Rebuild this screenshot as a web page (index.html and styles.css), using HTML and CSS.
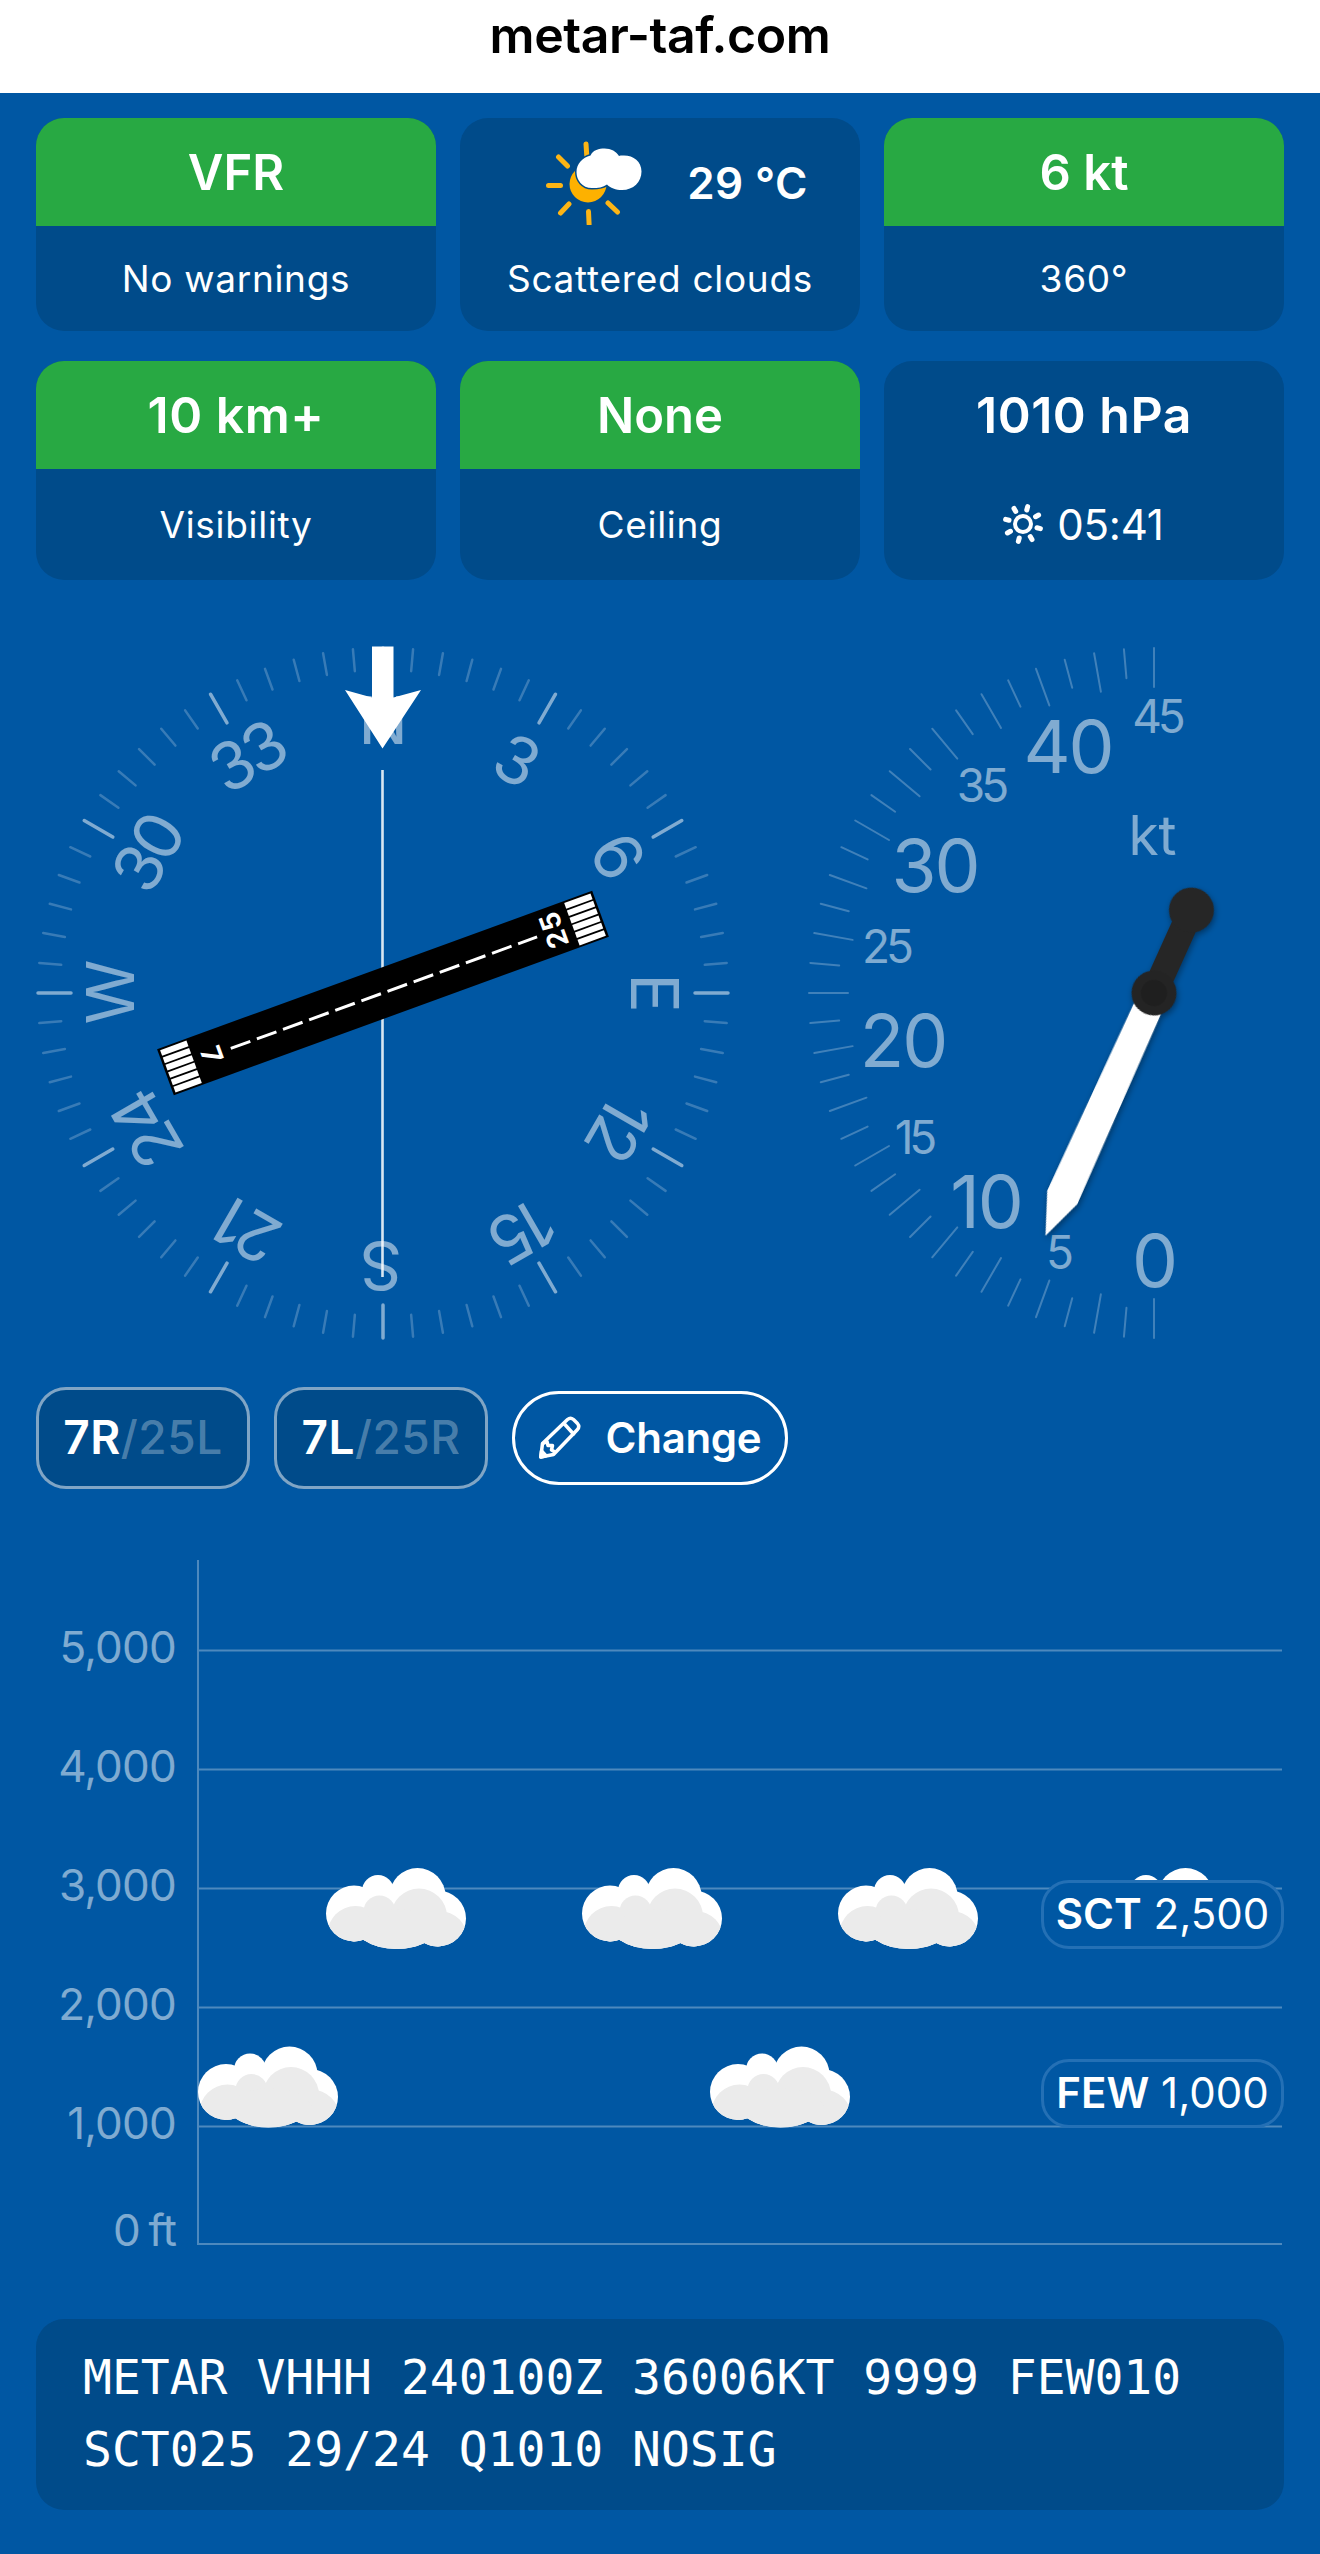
FILE: index.html
```html
<!DOCTYPE html>
<html lang="en">
<head>
  <meta charset="UTF-8" />
  <meta name="viewport" content="width=device-width, initial-scale=1.0"/>
  <title>METAR VHHH</title>
  <link rel="stylesheet" href="styles.css">
</head>
<body>

  <header class="topbar">metar-taf.com</header>

  <main>
    <section class="cards">
      <div class="card">
        <div class="value ok">VFR</div>
        <div class="label">No warnings</div>
      </div>
      <div class="card">
        <div class="value weather">
          <svg width="96" height="84" viewBox="0 0 96 84">
            <path d="M40 3l.8 12M12.500 16l9 9M2.500 44.500h12M23 63l-8.500 9M42.500 70.500l.6 12.500M62 62l9.500 9" stroke="#fdb515" stroke-width="5" stroke-linecap="round"/>
            <circle cx="42" cy="43" r="18.500" fill="#fdb100"/>
            <path d="M46 47C36 47 30.500 39 30.500 31c0-8 6-14.500 14-16.500C47 9 53 7.500 58.500 7.500c6.500 0 12 3 14.500 7.500 2-.8 4-.5 5-.5 9.500 0 17.500 6 17.500 16 0 10.500-8 18.500-19.500 18.500-6 0-12-2-15-5.500-4 3-9 3.500-15 3.500z" fill="#fff" stroke="#004b8a" stroke-width="3" paint-order="stroke"/>
          </svg>
          <span>29 °C</span>
        </div>
        <div class="label">Scattered clouds</div>
      </div>
      <div class="card">
        <div class="value ok">6 kt</div>
        <div class="label">360°</div>
      </div>
      <div class="card">
        <div class="value ok wide">10 km+</div>
        <div class="label">Visibility</div>
      </div>
      <div class="card">
        <div class="value ok">None</div>
        <div class="label">Ceiling</div>
      </div>
      <div class="card">
        <div class="value wide">1010 hPa</div>
        <div class="label time">
          <svg width="42" height="42" viewBox="-21 -21 42 42">
            <circle r="8" fill="none" stroke="#fff" stroke-width="4"/>
            <g id="sunrays" stroke="#fff" stroke-width="5" stroke-linecap="round"></g>
          </svg>
          <span>05:41</span>
        </div>
      </div>
    </section>

    <section class="dials">
      <svg class="compass" width="694" height="694" viewBox="-347 -347 694 694">
        <g id="compass-ticks"></g>
        <g id="compass-labels" class="compass-text"></g>
        <path d="M-.5-223V284" stroke="#fff" stroke-width="2.600" opacity=".85"/>
        <g transform="rotate(-20)">
          <rect x="-231.500" y="-24.500" width="463" height="49" fill="#000"/>
          <g id="stripes" fill="#fff"></g>
          <path d="M-162 0H164" stroke="#fff" stroke-width="3" stroke-dasharray="20.800 7"/>
          <text class="runway-text" transform="translate(-192 0) rotate(90)">7</text>
          <text class="runway-text" transform="translate(192 -1) rotate(-90)">25</text>
        </g>
        <path d="M-11-346.500h21.500v51l27.500-7.500L-.5-244.500-38-303l27 7.500z" fill="#fff"/>
      </svg>

      <svg class="gauge" width="476" height="694" viewBox="-346 -347 476 694">
        <g id="gauge-ticks"></g>
        <g class="gauge-text">
          <text x="0" y="294">0</text>
          <text x="-168" y="235">10</text>
          <text x="-251" y="74">20</text>
          <text x="-219" y="-101">30</text>
          <text x="-86" y="-220">40</text>
        </g>
        <g class="gauge-text small">
          <text x="-96" y="276">5</text>
          <text x="-240" y="161">15</text>
          <text x="-268" y="-30">25</text>
          <text x="-173" y="-191">35</text>
          <text x="3" y="-260">45</text>
        </g>
        <text class="unit" x="-1.500" y="-138">kt</text>
        <g class="needle" transform="rotate(24.300)">
          <path d="M-14 10L-16 224L1 266L17 224L15 10z" fill="#fff"/>
          <path d="M-13-80h26v80h-26z" fill="#262626"/>
          <circle cy="-91" r="22.500" fill="#262626"/>
          <circle r="22.500" fill="#242424"/>
          <circle r="13" fill="#1f1f1f"/>
        </g>
      </svg>
    </section>

    <section class="runways">
      <button class="runway"><b>7R</b>/25L</button>
      <button class="runway"><b>7L</b>/25R</button>
      <button class="change">
        <svg width="42" height="43" viewBox="0 0 42 43" fill="none" stroke="#fff" stroke-width="3.500" stroke-linejoin="round" stroke-linecap="round">
          <path d="M1.800 41L3.500 27.500L28.500 3.500Q31.500 1 34.500 3.500L38.500 7.500Q41 10.500 38.500 13.500L14.500 38.500z"/>
          <path d="M25 7.500L34.500 18M4 27.500L8 25.500L9 29.500L13.500 29.500L12.500 34L16 36M1.800 41L2.500 35L7 39.800z"/>
        </svg>
        <span>Change</span>
      </button>
    </section>

    <section class="chart">
      <ul class="altitudes">
        <li>5,000</li>
        <li>4,000</li>
        <li>3,000</li>
        <li>2,000</li>
        <li>1,000</li>
        <li>0 ft</li>
      </ul>
      <div class="plot">
        <svg width="1085" height="685" viewBox="0 0 1085 685">
          <defs>
            <g id="cloud-shape">
              <circle cx="28" cy="45.500" r="28"/>
              <circle cx="52" cy="23" r="16"/>
              <circle cx="91.500" cy="28" r="28"/>
              <circle cx="112" cy="50.500" r="28"/>
              <ellipse cx="70.500" cy="51" rx="46" ry="30"/>
            </g>
            <clipPath id="cloud-clip">
              <circle cx="28" cy="45.500" r="28"/>
              <circle cx="52" cy="23" r="16"/>
              <circle cx="91.500" cy="28" r="28"/>
              <circle cx="112" cy="50.500" r="28"/>
              <ellipse cx="70.500" cy="51" rx="46" ry="30"/>
            </clipPath>
            <g id="cloud">
              <use href="#cloud-shape" fill="#fff"/>
              <g clip-path="url(#cloud-clip)"><use href="#cloud-shape" x="1.500" y="20.500" fill="#ebebeb"/></g>
            </g>
          </defs>
          <path class="grid" d="M1 0V685M0 90.500H1085M0 209.500H1085M0 328.500H1085M0 447.500H1085M0 566.500H1085M0 684H1085"/>
          <use href="#cloud" x="129" y="308"/>
          <use href="#cloud" x="385" y="308"/>
          <use href="#cloud" x="641" y="308"/>
          <use href="#cloud" x="897" y="308"/>
          <use href="#cloud" x="1" y="486.500"/>
          <use href="#cloud" x="513" y="486.500"/>
        </svg>
        <div class="badge sct"><b>SCT</b> 2,500</div>
        <div class="badge few"><b>FEW</b> 1,000</div>
      </div>
    </section>

    <pre class="metar">METAR VHHH 240100Z 36006KT 9999 FEW010
SCT025 29/24 Q1010 NOSIG</pre>
  </main>

  <script>
    function line(angle, r1, r2, opacity, width) {
      return `<line y1="${-r1}" y2="${-r2}" transform="rotate(${angle})" stroke="#fff" stroke-opacity="${opacity}" stroke-width="${width}" stroke-linecap="round"/>`;
    }

    let ticks = '';
    for (let a = 0; a < 360; a += 5) {
      ticks += a % 30 === 0 ? line(a, 345, 312, 0.5, 3.5) : line(a, 345, 323, 0.22, 2.5);
    }
    document.getElementById('compass-ticks').innerHTML = ticks;

    // label, shift along the ring, distance from the centre
    const names = [
      ['N', -2, 249], ['3', -2, 245], ['6', -3, 248], ['E', -2, 248], ['12', -1, 248], ['15', -2, 252],
      ['S', 0, 249], ['21', -4, 250], ['24', -1, 249], ['W', -1, 249], ['30', 3, 250], ['33', 0, 249]
    ];
    document.getElementById('compass-labels').innerHTML = names.map(([name, x, r], i) =>
      `<text x="${x}" y="${-r}" transform="rotate(${i * 30})">${name}</text>`
    ).join('');

    let speed = '';
    for (let i = 0; i <= 36; i++) {
      speed += line(180 + i * 5, 345, i % 2 ? 316 : 306, 0.25, 2);
    }
    document.getElementById('gauge-ticks').innerHTML = speed;

    let stripes = '';
    for (let i = 0; i < 6; i++) {
      const y = -22.5 + i * 7.8;
      stripes += `<rect x="-229" y="${y}" width="28" height="6"/><rect x="201" y="${y}" width="28" height="6"/>`;
    }
    document.getElementById('stripes').innerHTML = stripes;

    let rays = '';
    for (let i = 0; i < 8; i++) {
      rays += `<line y1="-14.5" y2="-18" transform="rotate(${15 + i * 45})"/>`;
    }
    document.getElementById('sunrays').innerHTML = rays;
  </script>
</body>
</html>
```

FILE: styles.css
```css
* {
  box-sizing: border-box;
}
body {
  margin: 0;
  background: #0057a3;
  color: #fff;
  font-family: Inter, "Liberation Sans", sans-serif;
}
.topbar {
  height: 93px;
  padding-top: 5px;
  background: #fff;
  color: #000;
  font-size: 50px;
  font-weight: 600;
  line-height: 60px;
  letter-spacing: -0.4px;
  text-align: center;
}
main {
  padding: 25px 36px 44px;
}
.cards {
  display: grid;
  grid-template-columns: repeat(3, 400px);
  grid-template-rows: 213px 219px;
  gap: 30px 24px;
}
.card {
  display: flex;
  flex-direction: column;
  background: #004b8a;
  border-radius: 28px;
  overflow: hidden;
}
.value {
  height: 108px;
  line-height: 110px;
  font-size: 49px;
  font-weight: 600;
  text-align: center;
}
.value.ok {
  background: #28a943;
}
.value.wide {
  line-height: 108px;
  font-size: 50px;
  letter-spacing: 0.5px;
}
.weather {
  display: flex;
  justify-content: center;
  align-items: center;
  padding: 22px 0 0 34px;
  font-size: 44px;
  letter-spacing: 0.4px;
}
.weather svg {
  margin-right: 45px;
}
.label {
  flex: 1;
  display: flex;
  justify-content: center;
  align-items: center;
  padding-bottom: 1px;
  font-size: 37px;
  letter-spacing: 0.7px;
}
.time {
  gap: 13px;
  padding-right: 2px;
  font-size: 42px;
  letter-spacing: -0.2px;
}
.dials {
  display: flex;
  justify-content: space-between;
  margin-top: 66px;
}
.compass-text {
  fill: rgba(255,255,255,0.5);
  font-size: 66px;
  letter-spacing: -4px;
  text-anchor: middle;
}
.runway-text {
  fill: #fff;
  font-size: 28px;
  font-weight: 700;
  letter-spacing: 1px;
  text-anchor: middle;
}
.gauge {
  overflow: visible;
}
.gauge-text, .unit {
  fill: rgba(255,255,255,0.5);
  font-size: 73px;
  letter-spacing: -2px;
  text-anchor: middle;
}
.gauge-text.small {
  font-size: 46px;
  letter-spacing: -4px;
}
.unit {
  font-size: 55px;
  letter-spacing: 0;
}
.needle {
  filter: drop-shadow(2px 2px 3px rgba(0,0,0,0.4));
}
.runways {
  display: flex;
  align-items: center;
  gap: 24px;
  margin-top: 47px;
}
button {
  color: #fff;
  font-family: inherit;
}
.runway {
  width: 214px;
  height: 102px;
  padding: 0 0 2px;
  background: #004b8a;
  border: 3px solid rgba(255,255,255,0.5);
  border-radius: 30px;
  color: rgba(255,255,255,0.3);
  font-size: 46px;
  font-weight: 500;
  letter-spacing: 0.5px;
}
.runway b {
  color: #fff;
  font-weight: 600;
}
.change {
  display: flex;
  align-items: center;
  justify-content: center;
  gap: 25px;
  width: 276px;
  height: 94px;
  padding-bottom: 3px;
  background: none;
  border: 3px solid #fff;
  border-radius: 47px;
  font-size: 42px;
  font-weight: 600;
  letter-spacing: -0.3px;
}
.chart {
  display: flex;
  margin-top: 71px;
}
.altitudes {
  width: 140px;
  margin: 0 21px 0 0;
  padding: 28px 0 0;
  list-style: none;
  color: rgba(255,255,255,0.5);
  font-size: 44px;
  letter-spacing: -0.8px;
  word-spacing: -3px;
  text-align: right;
}
.altitudes li {
  height: 119px;
  line-height: 119px;
}
.altitudes li:last-child {
  height: 62px;
  line-height: 94px;
}
.plot {
  position: relative;
  width: 1085px;
  height: 685px;
}
.plot svg {
  display: block;
}
.grid {
  stroke: rgba(255,255,255,0.3);
  stroke-width: 2;
}
.badge {
  position: absolute;
  right: -2px;
  width: 243px;
  height: 69px;
  background: #0057a3;
  border: 3px solid #2470b5;
  border-radius: 28px;
  font-size: 42px;
  line-height: 61px;
  text-align: center;
}
.badge b {
  font-weight: 600;
}
.sct {
  top: 320px;
}
.few {
  top: 499px;
}
.metar {
  height: 191px;
  margin: 74px 0 0;
  padding: 22px 47px;
  background: #004b8a;
  border-radius: 28px;
  font-family: "DejaVu Sans Mono", monospace;
  font-size: 48px;
  line-height: 72px;
}
```
